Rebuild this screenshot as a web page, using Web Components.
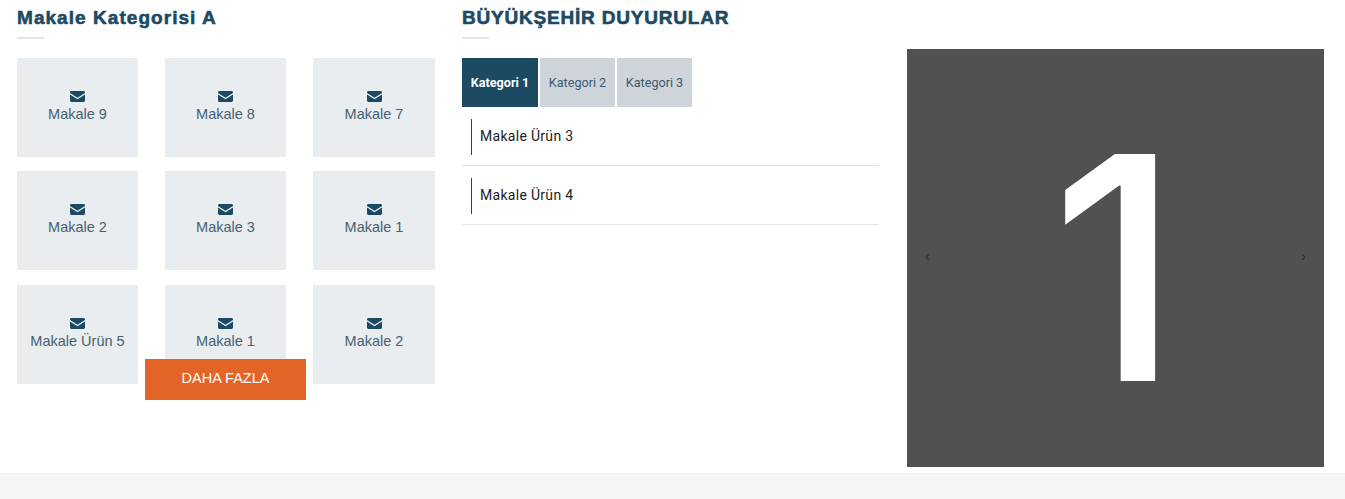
<!DOCTYPE html>
<html lang="tr">
<head>
<meta charset="utf-8">
<title>Makale</title>
<style>
  html, body { margin: 0; padding: 0; background: #fff; }
  body { font-family: "Liberation Sans", Arial, sans-serif; }
</style>
</head>
<body>
<template id="page-template">
  <style>
    :host { display: flex; flex-direction: column; height: 499px; overflow: hidden; }
    .columns { display: flex; height: 473px; padding-left: 17px; box-sizing: border-box; }
    .left { width: 418px; margin-right: 27px; }
    .middle { width: 417px; margin-right: 28px; }
    .right { width: 417px; padding-top: 49px; }
    .band { flex: 1; background: #f5f6f8; }
  </style>
  <div class="columns">
    <div class="left"><slot name="left"></slot></div>
    <div class="middle"><slot name="middle"></slot></div>
    <div class="right"><slot name="right"></slot></div>
  </div>
  <div class="band"></div>
</template>

<template id="heading-template">
  <style>
    :host { display: block; height: 58px; box-sizing: border-box; padding-top: 7px; }
    h2 {
      margin: 0;
      font: bold 19px/21px "Liberation Sans", Arial, sans-serif;
      letter-spacing: var(--track, 1px);
      -webkit-text-stroke: 0.6px #1d4a63;
      color: #1d4a63;
    }
    i { display: block; width: 27px; height: 2px; background: #e3e5e6; margin-top: 9px; }
  </style>
  <h2><slot></slot></h2>
  <i></i>
</template>

<template id="tile-template">
  <style>
    :host {
      display: flex; flex-direction: column; align-items: center; justify-content: center;
      height: 99px; padding-bottom: 2px; box-sizing: border-box;
      background: #e9edf0; color: #456173;
      font: 14.5px/18px "Liberation Sans", Arial, sans-serif;
    }
    svg { display: block; width: 15px; height: 11px; margin-bottom: 3px; }
  </style>
  <svg viewBox="0 0 15 11" aria-hidden="true">
    <path fill="#1d4a63" d="M1.4 0h12.2C14.4 0 15 .6 15 1.4v.5L7.5 6.8 0 1.9v-.5C0 .6.6 0 1.4 0zM0 3.4l7.5 4.9L15 3.4v6.2c0 .8-.6 1.4-1.4 1.4H1.4C.6 11 0 10.4 0 9.6z"/>
  </svg>
  <span><slot></slot></span>
</template>

<template id="grid-template">
  <style>
    :host { display: flex; flex-direction: column; align-items: center; }
    .grid { width: 100%; display: grid; grid-template-columns: 121px 121px 122px; column-gap: 27px; row-gap: 14px; }
    ::slotted(:nth-child(n+7)) { margin-top: 1px; }
    a {
      display: block; width: 161px; height: 41px; margin: -25px 1px 0 0; position: relative;
      background: #e26527; color: #fff; text-align: center;
      font: 14.5px/39px "Liberation Sans", Arial, sans-serif;
    }
  </style>
  <div class="grid"><slot></slot></div>
  <a><slot name="more"></slot></a>
</template>

<template id="tabs-template">
  <style>
    :host { display: flex; gap: 2px; height: 49px; }
  </style>
  <slot></slot>
</template>

<template id="tab-template">
  <style>
    :host {
      display: flex; align-items: center; justify-content: center;
      width: 75px; height: 49px; background: #ced4da; color: #3d5a6e;
      font: 12.6px "Roboto", Arial, sans-serif;
    }
    :host([active]) { width: 76px; background: #1d4a63; color: #fff; font-weight: 700; }
  </style>
  <slot></slot>
</template>

<template id="item-template">
  <style>
    :host { display: block; height: 59px; box-sizing: border-box; padding: 12px 0 0 9px; border-bottom: 1px solid #e3e5e6; }
    div {
      height: 36px; border-left: 1px solid #1d4a63; padding-left: 8px;
      color: #222; font: 14px/34px "Roboto", Arial, sans-serif; letter-spacing: 0.3px;
    }
  </style>
  <div><slot></slot></div>
</template>

<template id="slider-template">
  <style>
    :host {
      display: flex; align-items: center; justify-content: space-between;
      height: 418px; padding: 0 18px 4px; box-sizing: border-box; background: #515151;
      position: relative; color: #2b2b2b;
      font: 14px "Liberation Sans", Arial, sans-serif;
    }
    .num {
      position: absolute; left: 0; right: 0; top: 0; bottom: 0; padding-top: 19px;
      display: flex; align-items: center; justify-content: center;
      color: #fff; font: 500 312px/1 "Inter", sans-serif;
    }
    span { position: relative; }
  </style>
  <span>‹</span>
  <div class="num"><slot></slot></div>
  <span>›</span>
</template>

<news-page>
  <div slot="left">
    <section-heading style="--track: 1.05px">Makale Kategorisi A</section-heading>
    <tile-grid>
      <article-tile>Makale 9</article-tile>
      <article-tile>Makale 8</article-tile>
      <article-tile>Makale 7</article-tile>
      <article-tile>Makale 2</article-tile>
      <article-tile>Makale 3</article-tile>
      <article-tile>Makale 1</article-tile>
      <article-tile>Makale Ürün 5</article-tile>
      <article-tile>Makale 1</article-tile>
      <article-tile>Makale 2</article-tile>
      <span slot="more">DAHA FAZLA</span>
    </tile-grid>
  </div>
  <div slot="middle">
    <section-heading style="--track: 0.8px">BÜYÜKŞEHİR DUYURULAR</section-heading>
    <tab-bar>
      <tab-item active>Kategori 1</tab-item>
      <tab-item>Kategori 2</tab-item>
      <tab-item>Kategori 3</tab-item>
    </tab-bar>
    <list-item>Makale Ürün 3</list-item>
    <list-item>Makale Ürün 4</list-item>
  </div>
  <image-slider slot="right">1</image-slider>
</news-page>

<script>
  // every element is the same thing: clone its template into an open shadow root
  const parts = {
    'news-page': 'page-template',
    'section-heading': 'heading-template',
    'article-tile': 'tile-template',
    'tile-grid': 'grid-template',
    'tab-bar': 'tabs-template',
    'tab-item': 'tab-template',
    'list-item': 'item-template',
    'image-slider': 'slider-template'
  };

  Object.keys(parts).forEach((name) => {
    customElements.define(name, class extends HTMLElement {
      constructor() {
        super();
        const tpl = document.getElementById(parts[name]);
        this.attachShadow({ mode: 'open' }).appendChild(tpl.content.cloneNode(true));
      }
    });
  });
</script>
</body>
</html>
